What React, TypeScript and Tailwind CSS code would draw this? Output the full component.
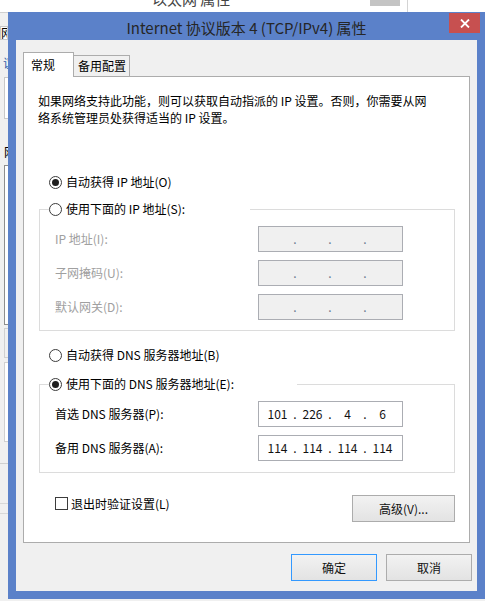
import React from "react";

function Radio({ checked }: { checked: boolean }) {
  return (
    <span className="w-[13px] h-[13px] rounded-full border border-[#3c3c3c] bg-white flex items-center justify-center shrink-0">
      {checked && <span className="w-[7px] h-[7px] rounded-full bg-[#1e1e1e]" />}
    </span>
  );
}

function IpBox({ values, disabled }: { values: string[]; disabled?: boolean }) {
  return (
    <div
      className={
        "w-[145px] h-[26px] border border-[#abadb3] flex items-center pl-[2px] " +
        (disabled ? "bg-[#f0f0f0] text-[#7a7a7a]" : "bg-white text-[#111]")
      }
    >
      {values.map((v, i) => (
        <React.Fragment key={i}>
          <span className="w-[33px] text-center leading-[16px]">{v}</span>
          {i < 3 && (
            <span className={"w-[2px] flex justify-center leading-[16px] " + (disabled ? "text-[#6b7b8f]" : "")}>
              .
            </span>
          )}
        </React.Fragment>
      ))}
    </div>
  );
}

function Btn({ label, def, w }: { label: string; def?: boolean; w: string }) {
  return (
    <div
      className={
        "h-[27px] flex items-center justify-center border bg-gradient-to-b from-[#f2f2f2] to-[#e3e3e3] text-[#111] " +
        (def ? "border-[#3399ff]" : "border-[#acacac]") +
        " " +
        w
      }
    >
      {label}
    </div>
  );
}

export default function App() {
  return (
    <div className="relative w-[485px] h-[601px] overflow-hidden bg-[#f0f0f0] font-['Noto_Sans_CJK_SC',sans-serif] text-[12px] text-black">
      {/* background window behind the dialog */}
      <div className="absolute left-0 top-0 w-[485px] h-[12px] bg-white">
        <div className="absolute left-[152px] top-[-9px] text-[15px] leading-[16px] text-[#444] whitespace-nowrap">
          以太网 属性
        </div>
        <div className="absolute left-[370px] top-0 w-[30px] h-[6px] bg-[#c4c4c4]" />
        <div className="absolute left-[407px] top-0 w-px h-[12px] bg-[#d4d4d4]" />
      </div>
      <div className="absolute left-0 top-[12px] w-[8px] h-px bg-[#d0d0d0]" />
      <div className="absolute left-0 top-[26px] w-[8px] h-[14px] bg-white border border-[#c8c8c8] overflow-hidden text-[12px] leading-[12px]">
        网
      </div>
      <div className="absolute left-[3px] top-[57px] text-[12px] leading-[12px] text-[#2b5ca8] overflow-hidden w-[5px]">
        议
      </div>
      <div className="absolute left-[4px] top-[77px] w-[8px] h-[42px] bg-white border border-[#c8c8c8]" />
      <div className="absolute left-[4px] top-[146px] text-[12px] leading-[12px] w-[4px] overflow-hidden">
        网
      </div>
      <div className="absolute left-[4px] top-[165px] w-[8px] h-[160px] bg-white border border-[#8e8e8e]" />
      <div className="absolute left-[4px] top-[328px] w-[8px] h-[30px] border border-[#d0d0d0]" />
      <div className="absolute left-[4px] top-[362px] w-[8px] h-[80px] bg-white border border-[#d0d0d0]" />
      <div className="absolute left-0 top-[463px] w-[8px] h-px bg-[#d0d0d0]" />
      <div className="absolute left-0 top-[503px] w-[8px] h-px bg-[#d8d8d8]" />
      <div className="absolute left-0 top-[513px] w-[8px] h-px bg-[#d8d8d8]" />

      {/* dialog */}
      <div className="absolute left-[8px] top-[12px] w-[477px] h-[587px] bg-[#5b81c9] flex flex-col">
        <div className="relative h-[28px] shrink-0 flex justify-center pt-[7px] text-[15px] leading-[18px] text-[#262626] whitespace-nowrap">
          Internet 协议版本 4 (TCP/IPv4) 属性
          <div className="absolute right-[5px] top-[1px] w-[31px] h-[20px] bg-[#c75050] flex items-center justify-center">
            <svg width="10" height="9" viewBox="0 0 10 9">
              <path d="M1 0.5 L9 8.5 M9 0.5 L1 8.5" stroke="white" strokeWidth="1.8" />
            </svg>
          </div>
        </div>

        <div className="mx-[8px] h-[551px] bg-[#f0f0f0] flex flex-col">
          {/* tabs */}
          <div className="flex items-end h-[24px] mt-[12px] pl-[7px]">
            <div className="relative z-10 w-[51px] h-[25px] -mb-px bg-white border border-b-0 border-[#acacac] pl-[7px] pt-[3px] leading-[17px]">
              常规
            </div>
            <div className="w-[56px] h-[21px] bg-[#f0f0f0] border border-l-0 border-b-0 border-[#acacac] pl-[4px] pt-[1px] leading-[17px]">
              备用配置
            </div>
          </div>

          {/* panel */}
          <div className="mx-[7px] h-[467px] bg-white border border-[#acacac] flex flex-col">
            <div className="pl-[14px] pt-[15px] leading-[17px] whitespace-nowrap">
              如果网络支持此功能，则可以获取自动指派的 IP 设置。否则，你需要从网
              <br />
              络系统管理员处获得适当的 IP 设置。
            </div>

            <div className="mt-[48px] ml-[25px] h-[16px] flex items-center gap-[4px] leading-[16px]">
              <Radio checked />
              <span>自动获得 IP 地址(O)</span>
            </div>

            <div className="mt-[19px] ml-[15px] mr-[14px] border border-[#dcdcdc] flex flex-col pb-[10px]">
              <div className="-mt-[9px] ml-[9px] w-[201px] h-[16px] bg-white flex items-center gap-[4px] leading-[16px]">
                <Radio checked={false} />
                <span>使用下面的 IP 地址(S):</span>
              </div>
              <div className="mt-[9px] flex flex-col gap-[8px]">
                {["IP 地址(I):", "子网掩码(U):", "默认网关(D):"].map((l) => (
                  <div key={l} className="flex items-center pl-[15px]">
                    <span className="w-[203px] text-[#a0a0a0] leading-[16px]">{l}</span>
                    <IpBox values={["", "", "", ""]} disabled />
                  </div>
                ))}
              </div>
            </div>

            <div className="mt-[16px] ml-[25px] h-[16px] flex items-center gap-[4px] leading-[16px]">
              <Radio checked={false} />
              <span>自动获得 DNS 服务器地址(B)</span>
            </div>

            <div className="mt-[21px] ml-[15px] mr-[14px] border border-[#dcdcdc] flex flex-col pb-[11px]">
              <div className="-mt-[9px] ml-[9px] w-[248px] h-[16px] bg-white flex items-center gap-[4px] leading-[16px]">
                <Radio checked />
                <span>使用下面的 DNS 服务器地址(E):</span>
              </div>
              <div className="mt-[9px] flex flex-col gap-[8px]">
                <div className="flex items-center pl-[15px]">
                  <span className="w-[203px] leading-[16px]">首选 DNS 服务器(P):</span>
                  <IpBox values={["101", "226", "4", "6"]} />
                </div>
                <div className="flex items-center pl-[15px]">
                  <span className="w-[203px] leading-[16px]">备用 DNS 服务器(A):</span>
                  <IpBox values={["114", "114", "114", "114"]} />
                </div>
              </div>
            </div>

            <div className="mt-[22px] pl-[31px] pr-[14px] flex items-start justify-between">
              <div className="flex items-center gap-[3px] mt-[2px] h-[13px]">
                <span className="w-[13px] h-[13px] border border-[#3c3c3c] bg-white shrink-0" />
                <span className="leading-[16px]">退出时验证设置(L)</span>
              </div>
              <Btn label="高级(V)..." w="w-[103px]" />
            </div>
          </div>

          {/* bottom buttons */}
          <div className="mt-[11px] pr-[5px] flex justify-end gap-[9px]">
            <Btn label="确定" def w="w-[86px]" />
            <Btn label="取消" w="w-[86px]" />
          </div>
        </div>
      </div>
    </div>
  );
}
